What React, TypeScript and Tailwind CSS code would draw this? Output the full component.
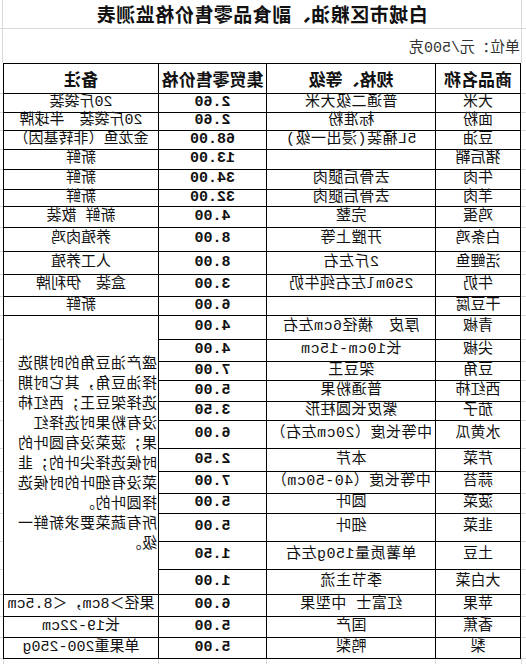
type Row = { name: string; spec: string; price: string; note?: string };

const rows: Row[] = [
  { name: "大米", spec: "普通二级大米", price: "2.60", note: "20斤袋装" },
  { name: "面粉", spec: "标准粉", price: "2.60", note: "20斤袋装　半球牌" },
  { name: "豆油", spec: "5L桶装(浸出一级)", price: "68.00", note: "金龙鱼（非转基因）" },
  { name: "猪后鞘", spec: "", price: "13.00", note: "新鲜" },
  { name: "牛肉", spec: "去骨后腿肉", price: "34.00", note: "新鲜" },
  { name: "羊肉", spec: "去骨后腿肉", price: "32.00", note: "新鲜" },
  { name: "鸡蛋", spec: "完整", price: "4.00", note: "新鲜 散装" },
  { name: "白条鸡", spec: "开膛上等", price: "8.00", note: "养殖肉鸡" },
  { name: "活鲤鱼", spec: "2斤左右", price: "8.00", note: "人工养殖" },
  { name: "牛奶", spec: "250ml左右纯牛奶", price: "3.00", note: "盒装　伊利牌" },
  { name: "干豆腐", spec: "", price: "6.00", note: "新鲜" },
  { name: "青椒", spec: "厚皮　横径6cm左右", price: "4.00" },
  { name: "尖椒", spec: "长10cm-15cm", price: "4.00" },
  { name: "豆角", spec: "架豆王", price: "7.00" },
  { name: "西红柿", spec: "普通粉果", price: "5.00" },
  { name: "茄子", spec: "紫皮长圆柱形", price: "3.50" },
  { name: "水黄瓜", spec: "中等长度（20cm左右）", price: "6.00" },
  { name: "芹菜", spec: "本芹", price: "2.50" },
  { name: "蒜苔", spec: "中等长度（40-50cm）", price: "7.00" },
  { name: "菠菜", spec: "圆叶", price: "5.00" },
  { name: "韭菜", spec: "细叶", price: "5.00" },
  { name: "土豆", spec: "单薯质量150g左右", price: "1.50" },
  { name: "大白菜", spec: "季节主流", price: "1.00" },
  { name: "苹果", spec: "红富士 中型果", price: "6.00", note: "果径＞8cm，＜8.5cm" },
  { name: "香蕉", spec: "国产", price: "5.00", note: "长19-22cm" },
  { name: "梨", spec: "鸭梨", price: "5.00", note: "单果重200-250g" },
];

// vegetables share one merged remark cell
const vegLines = [
  "盛产油豆角的时期选",
  "择油豆角，其它时期",
  "选择架豆王；西红柿",
  "没有粉果时选择红",
  "果；菠菜没有圆叶的",
  "时候选择尖叶的；韭",
  "菜没有细叶的时候选",
  "择圆叶的。",
  "所有蔬菜要求新鲜一",
  "级。",
];

const cell = "border-b border-r border-black flex items-center justify-center whitespace-nowrap";
const margin = "border-b border-[#d9d9d9]";

export default function App() {
  return (
    <div className="-scale-x-100 w-[526px] h-[664px] bg-white overflow-hidden text-[#111] font-['Liberation_Mono','Noto_Sans_CJK_SC',monospace]">
      <div className="grid grid-cols-[5px_86px_169px_108px_155px_3px] grid-rows-[29px_34px_31px_19px_18px_19px_20px_20px_17px_21px_24px_23px_22px_19px_24px_22px_19px_21px_19px_28px_23px_22px_20px_28px_28px_25px_22px_21px_21px_5px]">
        {/* title row */}
        <div className="border-b border-r border-[#d9d9d9]"></div>
        <div className="col-span-4 border-b border-[#d9d9d9] flex items-center justify-center font-['Noto_Sans_CJK_SC',sans-serif] font-bold text-[19px] tracking-[0.5px]">
          白城市区粮油、副食品零售价格监测表
        </div>
        <div className="border-b border-l border-[#d9d9d9]"></div>

        {/* unit row */}
        <div className="border-r border-[#d9d9d9]"></div>
        <div className="col-span-4 flex items-end pb-[3px] pl-[1px] text-[15px] text-[#333]">
          单位：元/500克
        </div>
        <div className="border-l border-[#d9d9d9]"></div>

        {/* header */}
        <div className={margin}></div>
        <div className={`${cell} border-t border-l font-['Noto_Sans_CJK_SC',sans-serif] font-bold text-[17px]`}>商品名称</div>
        <div className={`${cell} border-t font-['Noto_Sans_CJK_SC',sans-serif] font-bold text-[17px]`}>规格、等级</div>
        <div className={`${cell} border-t font-['Noto_Sans_CJK_SC',sans-serif] font-bold text-[17px]`}>集贸零售价格</div>
        <div className={`${cell} border-t font-['Noto_Sans_CJK_SC',sans-serif] font-bold text-[17px]`}>备注</div>
        <div className={margin}></div>

        {rows.map((r, i) => (
          <>
            <div key={`m${i}`} className={margin}></div>
            <div key={`n${i}`} className={`${cell} border-l text-[15px]`}>{r.name}</div>
            <div key={`s${i}`} className={`${cell} text-[15px] tracking-[0.5px]`}>{r.spec}</div>
            <div key={`p${i}`} className={`${cell} text-[15px] font-bold`}>{r.price}</div>
            {r.note !== undefined && (
              <div key={`r${i}`} className={`${cell} text-[15px]`}>{r.note}</div>
            )}
            {i === 11 && (
              <div key="veg" className="row-span-12 border-b border-r border-black flex flex-col justify-center pl-[1px] text-[15px] leading-[20px] tracking-[0.5px] whitespace-nowrap">
                {vegLines.map((l) => (
                  <div key={l}>{l}</div>
                ))}
              </div>
            )}
            <div key={`e${i}`} className={margin}></div>
          </>
        ))}

        {/* leftover excel grid below the table */}
        <div className="border-r border-[#d9d9d9]"></div>
        <div className="border-r border-[#d9d9d9]"></div>
        <div className="border-r border-[#d9d9d9]"></div>
        <div className="border-r border-[#d9d9d9]"></div>
        <div className="border-r border-[#d9d9d9]"></div>
        <div></div>
      </div>
    </div>
  );
}
